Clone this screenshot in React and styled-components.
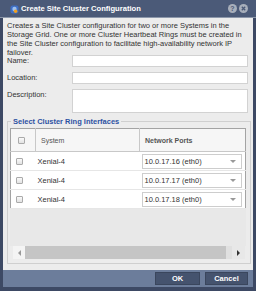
import React from 'react'
import styled, { createGlobalStyle } from 'styled-components'

const rows = [
  { system: 'Xenial-4', port: '10.0.17.16 (eth0)' },
  { system: 'Xenial-4', port: '10.0.17.17 (eth0)' },
  { system: 'Xenial-4', port: '10.0.17.18 (eth0)' },
]

const App = () => {
  return (
    <>
      <GlobalStyle />
      <Dialog>
        <TitleBar>
          <TitleIcon viewBox="0 0 9 9">
            <rect x="0.5" y="0.5" width="8" height="8" rx="2" fill="#3f6fc4" />
            <circle cx="4.5" cy="4" r="2.2" fill="#9cc0f0" />
            <circle cx="5.6" cy="6.2" r="1.8" fill="#f0a020" />
          </TitleIcon>
          <Title>Create Site Cluster Configuration</Title>
          <TitleButtons>
            <RoundButton>?</RoundButton>
            <RoundButton>
              <svg width="5" height="5" viewBox="0 0 5 5">
                <path d="M0.8 0.8 L4.2 4.2 M4.2 0.8 L0.8 4.2" stroke="#4a5977" strokeWidth="1.3" />
              </svg>
            </RoundButton>
          </TitleButtons>
        </TitleBar>
        <Body>
          <Intro>
            Creates a Site Cluster configuration for two or more Systems in the
            Storage Grid. One or more Cluster Heartbeat Rings must be created in
            the Site Cluster configuration to facilitate high-availability network IP
            failover.
          </Intro>
          <FormRow>
            <Label>Name:</Label>
            <Input />
          </FormRow>
          <FormRow $gap={5}>
            <Label>Location:</Label>
            <Input />
          </FormRow>
          <FormRow $gap={5}>
            <Label>Description:</Label>
            <TextArea />
          </FormRow>
          <Group>
            <Legend>Select Cluster Ring Interfaces</Legend>
            <ScrollArea>
              <Grid>
                <thead>
                  <tr>
                    <HeadCell $w={25}><Check /></HeadCell>
                    <HeadCell $w={104}>System</HeadCell>
                    <HeadCell $bold>Network Ports</HeadCell>
                  </tr>
                </thead>
                <tbody>
                  {rows.map((r) => (
                    <tr key={r.port}>
                      <Cell><Check /></Cell>
                      <Cell>{r.system}</Cell>
                      <Cell>
                        <Select>
                          <span>{r.port}</span>
                          <Caret />
                        </Select>
                      </Cell>
                    </tr>
                  ))}
                </tbody>
              </Grid>
            </ScrollArea>
            <HScroll>
              <ArrowButton><ArrowLeft /></ArrowButton>
              <Thumb />
              <Track />
              <ArrowButton $plain><ArrowRight /></ArrowButton>
            </HScroll>
          </Group>
        </Body>
        <Footer>
          <FooterButton $w={45}>OK</FooterButton>
          <FooterButton $w={43}>Cancel</FooterButton>
        </Footer>
      </Dialog>
    </>
  )
}

export default App

const GlobalStyle = createGlobalStyle`
body {
  margin: 0;
  background: #3d4964;
  font-family: "Liberation Sans", Arial, sans-serif;
}
* { box-sizing: border-box; }
table { font-size: inherit; color: inherit; font-family: inherit; }
`

const Dialog = styled.div`
width: 256px;
height: 291px;
background: #3d4964;
display: flex;
flex-direction: column;
padding-bottom: 4px;
`

const TitleBar = styled.div`
height: 18px;
flex: none;
background: #4b5a78;
border-bottom: 1px solid #8d98ab;
display: flex;
align-items: center;
padding: 0 8px 0 10px;
`

const TitleIcon = styled.svg`
width: 9px;
height: 9px;
margin-top: 2px;
`

const Title = styled.div`
color: #fff;
font-weight: bold;
font-size: 7.6px;
margin-left: 2px;
flex: 1;
`

const TitleButtons = styled.div`
display: flex;
gap: 2px;
`

const RoundButton = styled.div`
width: 9px;
height: 9px;
border-radius: 50%;
background: #a8afbb;
color: #4a5977;
font-size: 7px;
font-weight: bold;
display: flex;
align-items: center;
justify-content: center;
`

const Body = styled.div`
flex: 1;
margin: 0 3px;
background: #ececec;
padding: 3px 2px 0 4px;
display: flex;
flex-direction: column;
color: #333;
font-size: 7.5px;
`

const Intro = styled.div`
line-height: 9px;
margin-bottom: -2px;
padding-right: 4px;
`

const FormRow = styled.div`
display: flex;
align-items: flex-start;
padding-right: 3px;
margin-top: ${(p) => p.$gap || 0}px;
`

const Label = styled.div`
width: 65px;
line-height: 12px;
flex: none;
`

const Input = styled.div`
flex: 1;
height: 12px;
background: #fff;
border: 1px solid #d2d2d2;
`

const TextArea = styled(Input)`
height: 24px;
`

const Group = styled.fieldset`
flex: 1;
min-width: 0;
margin: 4px 0 6px 0;
padding: 2px 4px 4px 2px;
border: 1px solid #cfcfcf;
display: flex;
flex-direction: column;
`

const Legend = styled.legend`
padding: 0 2px;
margin-left: 1px;
line-height: 9px;
color: #2d52a3;
font-weight: bold;
font-size: 7.5px;
`

const ScrollArea = styled.div`
flex: 1;
background: #e8e8e8;
`

const Grid = styled.table`
width: 100%;
border-collapse: collapse;
border: 1px solid #a3a3a3;
background: #fff;
font-size: 7.5px;
color: #333;
`

const HeadCell = styled.th`
width: ${(p) => (p.$w ? `${p.$w}px` : 'auto')};
height: 23px;
background: #f6f6f6;
border-left: 1px solid #c8c8c8;
border-bottom: 1px solid #c8c8c8;
text-align: left;
padding: 0 0 0 5px;
color: #555;
font-weight: ${(p) => (p.$bold ? 'bold' : 'normal')};
font-size: 7px;
&:first-child { border-left: none; padding-left: 7px; }
`

const Cell = styled.td`
height: 19px;
padding: 0 0 0 2px;
border-bottom: 1px solid #e6e6e6;
color: #333;
&:first-child { padding-left: 5px; }
`

const Check = styled.div`
width: 7px;
height: 7px;
border: 1px solid #aaa;
border-radius: 1px;
background: linear-gradient(#fafafa, #e2e2e2);
`

const Select = styled.div`
width: 100px;
height: 15px;
border: 1px solid #cdcdcd;
background: #fff;
display: flex;
align-items: center;
justify-content: space-between;
padding: 0 5px 0 2px;
color: #333;
`

const Caret = styled.div`
width: 0;
height: 0;
border-left: 3px solid transparent;
border-right: 3px solid transparent;
border-top: 3px solid #999;
`

const HScroll = styled.div`
height: 13px;
display: flex;
margin: 0 1px 0 3px;
`

const ArrowButton = styled.div`
width: ${(p) => (p.$plain ? 13 : 12)}px;
background: ${(p) => (p.$plain ? '#e8e8e8' : '#f4f4f4')};
display: flex;
align-items: center;
justify-content: center;
`

const ArrowLeft = styled.div`
width: 0;
height: 0;
border-top: 3px solid transparent;
border-bottom: 3px solid transparent;
border-right: 3px solid #999;
`

const ArrowRight = styled.div`
width: 0;
height: 0;
border-top: 3px solid transparent;
border-bottom: 3px solid transparent;
border-left: 3px solid #333;
`

const Thumb = styled.div`
flex: 1;
background: #c5c5c5;
`

const Track = styled.div`
width: 6px;
background: #e0e0e0;
`

const Footer = styled.div`
height: 17px;
flex: none;
margin: 0 3px;
background: #6c7d9b;
display: flex;
align-items: center;
justify-content: flex-end;
gap: 5px;
padding-right: 5px;
`

const FooterButton = styled.div`
width: ${(p) => p.$w}px;
height: 13px;
background: #45536e;
border: 1px solid #3a465d;
color: #fff;
font-size: 7.5px;
font-weight: bold;
display: flex;
align-items: center;
justify-content: center;
`
